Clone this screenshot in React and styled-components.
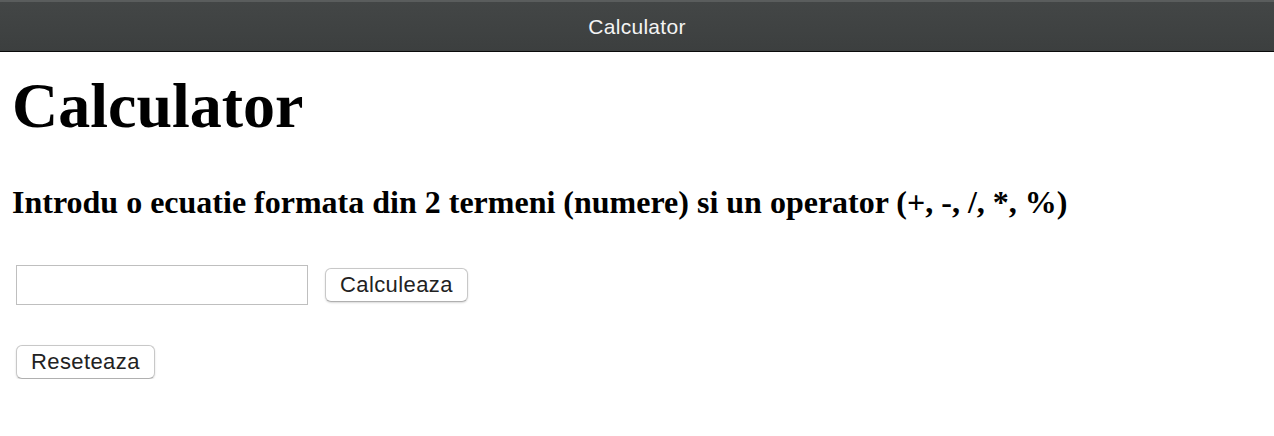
import React from "react";
import styled, { createGlobalStyle } from "styled-components";

const GlobalStyle = createGlobalStyle`
  html, body {
    margin: 0;
    padding: 0;
    background: #ffffff;
  }
`;

const App = () => {
  return (
    <>
      <GlobalStyle />
      <TitleBar>Calculator</TitleBar>
      <Page>
        <Heading>Calculator</Heading>
        <Prompt>Introdu o ecuatie formata din 2 termeni (numere) si un operator (+, -, /, *, %)</Prompt>
        <Row>
          <Field type="text" />
          <Button>Calculeaza</Button>
        </Row>
        <Row>
          <Button>Reseteaza</Button>
        </Row>
      </Page>
    </>
  );
};

export default App;

const TitleBar = styled.div`
  height: 52px;
  box-sizing: border-box;
  display: flex;
  align-items: center;
  justify-content: center;
  background: linear-gradient(180deg, #434646 0%, #3c3f3f 100%);
  border-top: 2px solid #5a5d5d;
  border-bottom: 1px solid #0a0a0a;
  color: #f4f4f4;
  font-family: "Liberation Sans", Arial, sans-serif;
  font-size: 21px;
  letter-spacing: 0.3px;
`;

const Page = styled.div`
  display: flex;
  flex-direction: column;
  align-items: flex-start;
  padding: 0 16px;
`;

const Heading = styled.h1`
  font-family: "Liberation Serif", "Times New Roman", serif;
  font-weight: 700;
  font-size: 64px;
  line-height: 72px;
  margin: 18px 0 0 -4px;
  color: #000;
`;

const Prompt = styled.h3`
  font-family: "Liberation Serif", "Times New Roman", serif;
  font-weight: 700;
  font-size: 32px;
  line-height: 37px;
  margin: 42px 0 0 -4px;
  color: #000;
`;

const Row = styled.div`
  display: flex;
  align-items: center;
  gap: 17px;
  margin-top: 44px;

  & + & {
    margin-top: 40px;
  }
`;

const Field = styled.input`
  width: 292px;
  height: 40px;
  box-sizing: border-box;
  border: 1px solid #bfbfbf;
  padding: 0 8px;
  font-size: 20px;
  outline: none;
`;

const Button = styled.button`
  height: 34px;
  box-sizing: border-box;
  padding: 0 14px;
  background: #ffffff;
  border: 1px solid #c8c8c8;
  border-bottom-color: #b0b0b0;
  border-radius: 6px;
  box-shadow: 0 1px 2px rgba(0, 0, 0, 0.15);
  color: #222;
  font-family: "Liberation Sans", Arial, sans-serif;
  font-size: 22px;
  letter-spacing: 0.4px;
  cursor: pointer;
`;
